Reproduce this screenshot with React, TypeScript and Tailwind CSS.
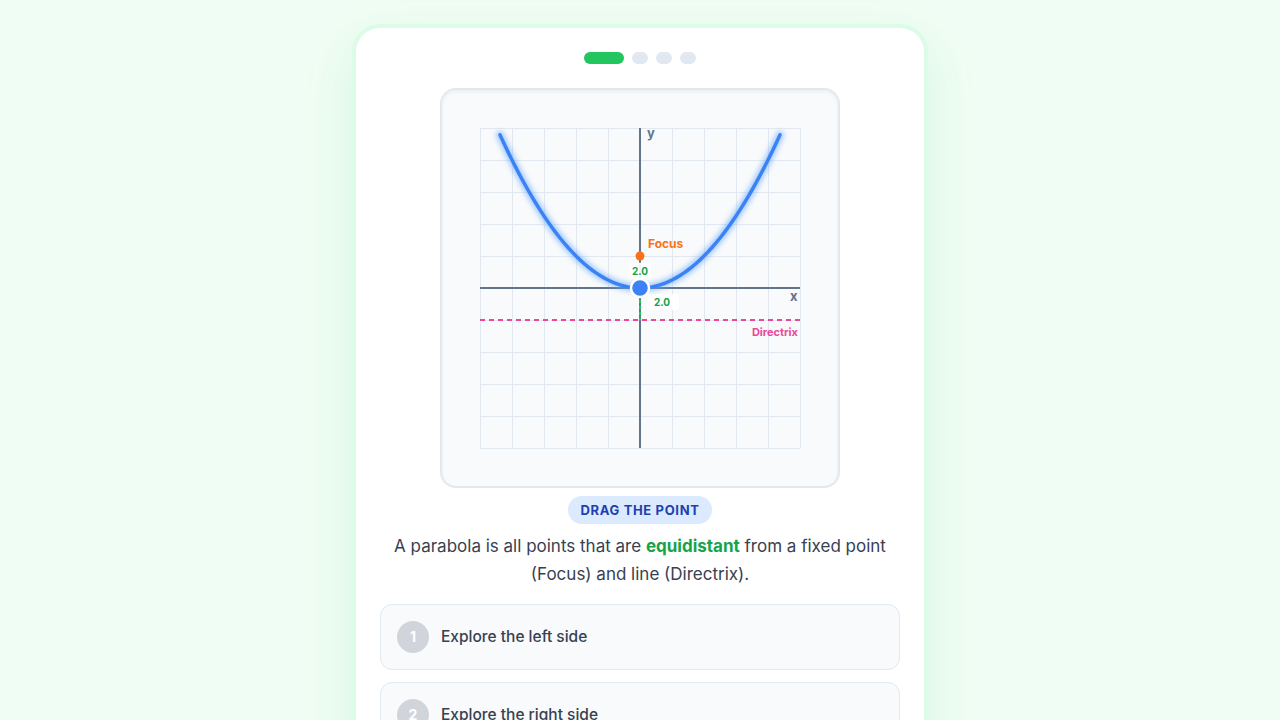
import { useState } from 'react';

const steps = ['Explore the left side', 'Explore the right side', 'Find the vertex', 'Check the distances'];

function Graph() {
  const cx = 160, cy = 160, p = 32;
  const pts: string[] = [];
  for (let dx = -140; dx <= 140; dx += 4) {
    pts.push(`${cx + dx},${cy - (dx * dx) / (4 * p)}`);
  }
  const lines = Array.from({ length: 11 }, (_, i) => i * 32);
  const font = 'Inter, sans-serif';

  return (
    <svg width="320" height="320" viewBox="0 0 320 320" className="overflow-visible">
      <defs>
        <filter id="glow" x="-20%" y="-20%" width="140%" height="140%">
          <feGaussianBlur stdDeviation="2.5" />
        </filter>
      </defs>
      {/* grid */}
      {lines.map(v => (
        <g key={v}>
          <line x1={v + 0.5} y1="0" x2={v + 0.5} y2="320" stroke="#e2e8f0" strokeWidth="1" />
          <line x1="0" y1={v + 0.5} x2="320" y2={v + 0.5} stroke="#e2e8f0" strokeWidth="1" />
        </g>
      ))}
      {/* axes */}
      <line x1="0" y1={cy} x2="320" y2={cy} stroke="#64748b" strokeWidth="2" />
      <line x1={cx} y1="0" x2={cx} y2="320" stroke="#64748b" strokeWidth="2" />
      <text x="167" y="10" fontSize="13" fontWeight="700" fill="#64748b" fontFamily={font}>y</text>
      <text x="310" y="173" fontSize="13" fontWeight="700" fill="#64748b" fontFamily={font}>x</text>

      {/* directrix */}
      <line x1="0" y1={cy + p} x2="320" y2={cy + p} stroke="#ec4899" strokeWidth="2" strokeDasharray="5 4" />
      <text x="318" y="208" textAnchor="end" fontSize="11" fontWeight="700" fill="#ec4899" fontFamily={font}>Directrix</text>

      {/* parabola */}
      <polyline points={pts.join(' ')} fill="none" stroke="#60a5fa" strokeWidth="8" strokeLinecap="round" filter="url(#glow)" opacity="0.55" />
      <polyline points={pts.join(' ')} fill="none" stroke="#3b82f6" strokeWidth="3.5" strokeLinecap="round" />

      {/* distance lines */}
      <line x1={cx} y1={cy - p} x2={cx} y2={cy} stroke="#94a3b8" strokeWidth="1.5" strokeDasharray="3 3" />
      <line x1={cx} y1={cy} x2={cx} y2={cy + p} stroke="#22c55e" strokeWidth="2" strokeDasharray="3 3" />

      {/* focus */}
      <circle cx={cx} cy={cy - p} r="4.5" fill="#f97316" />
      <text x="168" y="120" fontSize="12" fontWeight="700" fill="#f97316" fontFamily={font}>Focus</text>

      {/* distance labels */}
      <rect x="149" y="135" width="22" height="16" rx="3" fill="#ffffff" opacity="0.9" />
      <text x="160" y="147" textAnchor="middle" fontSize="10" fontWeight="700" fill="#16a34a" fontFamily={font}>2.0</text>
      <rect x="167" y="166" width="32" height="16" rx="3" fill="#ffffff" opacity="0.9" />
      <text x="182" y="178" textAnchor="middle" fontSize="10" fontWeight="700" fill="#16a34a" fontFamily={font}>2.0</text>

      {/* draggable point */}
      <circle cx={cx} cy={cy} r="9" fill="#3b82f6" stroke="#ffffff" strokeWidth="2.5" />
    </svg>
  );
}

export default function App() {
  const [active] = useState(0);

  return (
    <div className="min-h-screen bg-[#f0fdf4] flex justify-center pt-6" style={{ fontFamily: 'Inter, "Noto Sans", sans-serif' }}>
      <div className="w-[576px] h-fit rounded-[28px] border-4 border-[#dcfce7] bg-white px-6 pt-6 pb-6 shadow-[0_20px_50px_rgba(34,197,94,0.12)]">
        {/* progress dots */}
        <div className="flex justify-center gap-2">
          {[0, 1, 2, 3].map(i => (
            <div key={i} className={i === active ? 'h-3 w-10 rounded-full bg-[#22c55e]' : 'h-3 w-4 rounded-full bg-[#e2e8f0]'} />
          ))}
        </div>

        {/* graph */}
        <div className="mx-auto mt-6 flex h-[400px] w-[400px] items-center justify-center rounded-2xl border-2 border-[#e2e8f0] bg-[#f8fafc] shadow-inner">
          <Graph />
        </div>

        <div className="mt-2 flex justify-center">
          <span className="rounded-full bg-[#dbeafe] px-3 py-[5px] text-[13px] font-bold leading-[18px] tracking-wider text-[#1e40af]">DRAG THE POINT</span>
        </div>

        <p className="mt-2 text-center text-[17px] leading-7 text-[#374151]">
          A parabola is all points that are <span className="font-bold text-[#16a34a]">equidistant</span> from a fixed point (Focus) and line (Directrix).
        </p>

        {/* steps */}
        <div className="mt-4 flex flex-col gap-3">
          {steps.map((s, i) => (
            <div key={s} className="flex items-center gap-3 rounded-xl border border-[#e2e8f0] bg-[#f8fafc] p-4">
              <div className="flex h-8 w-8 items-center justify-center rounded-full bg-[#d1d5db] text-sm font-bold text-white">{i + 1}</div>
              <span className="text-[15.5px] font-medium text-[#374151]">{s}</span>
            </div>
          ))}
        </div>
      </div>
    </div>
  );
}
